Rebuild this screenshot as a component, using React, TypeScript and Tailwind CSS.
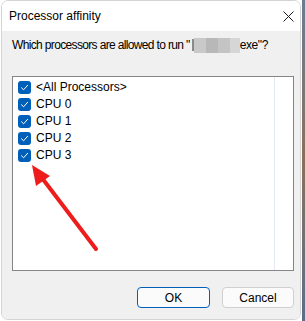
import React from "react";

const cpus = ["<All Processors>", "CPU 0", "CPU 1", "CPU 2", "CPU 3"];

function CheckBox() {
  return (
    <span className="flex h-[13px] w-[13px] shrink-0 items-center justify-center rounded-[3px] bg-[#005fb8]">
      <svg width="9" height="9" viewBox="0 0 9 9" fill="none">
        <path d="M1.5 4.8 L3.6 6.8 L7.6 2.3" stroke="#fff" strokeWidth="1" strokeLinecap="round" strokeLinejoin="round" />
      </svg>
    </span>
  );
}

export default function App() {
  return (
    <div
      className="relative flex h-[321px] w-[305px] bg-white text-[12px] text-[#1a1a1a]"
      style={{ fontFamily: '"Liberation Sans", Arial, sans-serif' }}
    >
      <div className="ml-[1px] flex h-[320px] w-[300px] flex-col overflow-hidden rounded-[7px] border border-[#d4d4d4]">
        {/* title bar */}
        <div className="flex h-[30px] shrink-0 items-center justify-between bg-white pl-[7px] pr-[6px]">
          <span className="whitespace-nowrap text-[12px] text-black">Processor affinity</span>
          <svg width="11" height="11" viewBox="0 0 11 11">
            <path d="M0.5 0.5 L10.5 10.5 M10.5 0.5 L0.5 10.5" stroke="#1a1a1a" strokeWidth="1" />
          </svg>
        </div>

        {/* body */}
        <div className="flex flex-1 flex-col bg-[#f0f0f0]">
          <div className="mt-[6px] flex h-[16px] items-center whitespace-nowrap pl-[10px] text-black">
            <span className="tracking-[-0.65px]">Which processors are allowed to run "</span>
            <span className="ml-[2px] flex h-[15px] items-center">
              <span className="h-[12px] w-[2px] bg-[#8a8a8a]" />
              <span className="h-[15px] w-[12px] bg-[#c9c9c9]" />
              <span className="h-[15px] w-[12px] bg-[#b8b8b8]" />
              <span className="h-[15px] w-[12px] bg-[#c4c4c4]" />
              <span className="h-[15px] w-[10px] bg-[#d6d6d6]" />
            </span>
            <span className="tracking-[-0.4px]">exe"?</span>
          </div>

          <div className="ml-[10px] mt-[23px] flex h-[195px] w-[282px] border border-[#858585] bg-white">
            <div className="flex w-[261px] flex-col pl-[5px] pt-[4px]">
              {cpus.map((c) => (
                <div key={c} className="flex h-[17px] items-start gap-[5px]">
                  <CheckBox />
                  <span className="-mt-[1px] whitespace-nowrap leading-[15px] text-black">{c}</span>
                </div>
              ))}
            </div>
            <div className="w-px bg-[#e3e9ef]" />
          </div>

          <div className="mt-[16px] flex justify-end gap-[12px] pr-[6px]">
            <button className="h-[21px] w-[73px] rounded-[4px] border border-[#005fb8] bg-[#fbfbfb] text-[12px] text-black">
              OK
            </button>
            <button className="h-[21px] w-[72px] rounded-[4px] border border-[#d0d0d0] bg-[#fbfbfb] text-[12px] text-black">
              Cancel
            </button>
          </div>
        </div>
      </div>

      {/* desktop sliver on the right */}
      <div className="ml-[1px] h-full w-[3px] bg-gradient-to-b from-[#6b7b93] via-[#8a6f5c] to-[#5b6e8a]" />

      {/* red annotation arrow */}
      <svg className="pointer-events-none absolute left-0 top-0" width="305" height="321">
        <line x1="96" y1="249" x2="42" y2="178" stroke="#ee1c1c" strokeWidth="4" strokeLinecap="round" />
        <polygon points="32,165 36,186 50,176" fill="#ee1c1c" />
      </svg>
    </div>
  );
}
